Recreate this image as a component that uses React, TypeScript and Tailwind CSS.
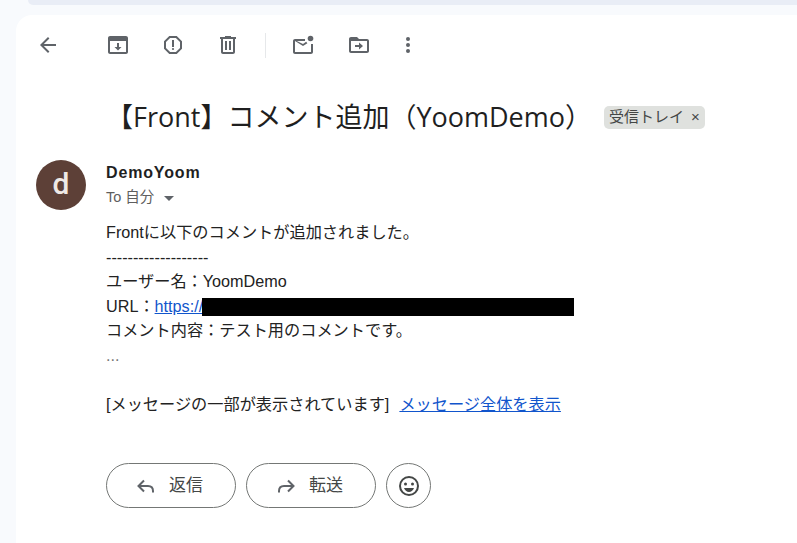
const cjk = '[font-family:"Liberation_Sans","Noto_Sans_CJK_JP",sans-serif]';

function ToolIcon({ children }: { children: React.ReactNode }) {
  return (
    <svg width="24" height="24" viewBox="0 0 24 24" fill="#5f6368" className="shrink-0">
      {children}
    </svg>
  );
}

function Toolbar() {
  return (
    <div className="flex h-[60px] items-center pl-[20px]">
      <ToolIcon>
        <path d="M20 11H7.830l5.590-5.590L12 4l-8 8 8 8 1.410-1.410L7.830 13H20v-2z" />
      </ToolIcon>
      <div className="ml-[46px] flex items-center gap-[31px]">
        <ToolIcon>
          <path d="M20 3H4c-.9 0-2 .9-2 2v14c0 1.100 1 2 2 2h16c1 0 2-.9 2-2V5c0-1.100-1.100-2-2-2zm0 16H4V8h16v11z" />
          <path d="M13 10h-2v4H8.500l3.500 3.500 3.500-3.500H13z" />
        </ToolIcon>
        <ToolIcon>
          <path d="M15.730 3H8.270L3 8.270v7.460L8.270 21h7.460L21 15.730V8.270L15.730 3zM19 14.900 14.900 19H9.100L5 14.900V9.100L9.100 5h5.800L19 9.100v5.800z" />
          <rect x="11" y="7" width="2" height="7" />
          <circle cx="12" cy="16" r="1.100" />
        </ToolIcon>
        <ToolIcon>
          <path d="M15 4V3H9v1H4v2h1v13c0 1.100.9 2 2 2h10c1.100 0 2-.9 2-2V6h1V4h-5zm2 15H7V6h10v13z" />
          <path d="M9 8h2v9H9zm4 0h2v9h-2z" />
        </ToolIcon>
      </div>
      <div className="ml-[25px] h-[25px] w-px bg-[#e6e8ea]" />
      <div className="ml-[25px] flex items-center">
        <ToolIcon>
          <path d="M14 6H4c-1.100 0-2 .9-2 2v11c0 1.100.9 2 2 2h16c1.100 0 2-.9 2-2v-8h-2v8H4V8l8 5 4.400-2.800-1.300-1.500L12 11 5.800 8H14V6z" />
          <circle cx="19.500" cy="5.500" r="2.800" />
        </ToolIcon>
        <div className="ml-[32px]">
          <ToolIcon>
            <path d="M20 6h-8l-2-2H4c-1.100 0-2 .9-2 2v12c0 1.100.9 2 2 2h16c1.100 0 2-.9 2-2V8c0-1.100-.9-2-2-2zm0 12H4V8h16v10z" />
            <path d="M12 9.500v2.500H8v2h4v2.500l4-3.500z" />
          </ToolIcon>
        </div>
        <div className="ml-[25px]">
          <ToolIcon>
            <circle cx="12" cy="6" r="2" />
            <circle cx="12" cy="12" r="2" />
            <circle cx="12" cy="18" r="2" />
          </ToolIcon>
        </div>
      </div>
    </div>
  );
}

function ActionButton({ label, flip }: { label: string; flip?: boolean }) {
  return (
    <button className="flex h-[45px] w-[130px] items-center justify-center gap-[11px] rounded-full border border-[#747775] pr-[5px] text-[17px] text-[#444746]">
      <svg
        width="24"
        height="24"
        viewBox="0 0 24 24"
        fill="none"
        stroke="#5f6368"
        strokeWidth="2"
        className={flip ? '-scale-x-100' : ''}
      >
        <path d="M10 6.500 4.500 12l5.500 5.500M5 12h9c3 0 5 2 5 5v1.500" />
      </svg>
      <span>{label}</span>
    </button>
  );
}

export default function App() {
  return (
    <div className={`h-[543px] w-[797px] overflow-hidden bg-[#f8fafd] ${cjk}`}>
      <div className="ml-[28px] h-[5px] rounded-bl-xl bg-[#e9edf6]" />
      <main className="ml-[16px] mt-[10px] h-[528px] rounded-tl-[16px] bg-white">
        <Toolbar />

        <div className="mt-[25px] flex items-center pl-[90px]">
          <h1 className='text-[27px] leading-[34px] text-[#1f1f1f] [font-family:"Open_Sans","Noto_Sans_CJK_JP",sans-serif]'>
            【Front】コメント追加（YoomDemo）
          </h1>
          <span className="ml-[12px] flex h-[23px] items-center rounded-[5px] bg-[#dfe1de] px-[5px] text-[15px] text-[#444746]">
            受信トレイ
            <span className="ml-[7px] text-[15px]">×</span>
          </span>
        </div>

        <div className="mt-[26px] flex pl-[20px]">
          <div className='flex h-[50px] w-[50px] shrink-0 items-center justify-center rounded-full bg-[#5d4037] pb-[3px] text-[30px] font-medium text-[#efe9e6] [font-family:"Roboto",sans-serif]'>
            d
          </div>
          <div className="ml-[20px] pt-[1px]">
            <div className="text-[16px] leading-[24px] font-bold tracking-[0.85px] text-[#1f1f1f]">DemoYoom</div>
            <div className="flex h-[25px] items-center pt-[1px] text-[14.5px] text-[#5e5e5e]">
              To 自分
              <svg width="10" height="5" viewBox="0 0 10 5" className="ml-[10px]" fill="#5f6368">
                <path d="M0 0h10L5 5z" />
              </svg>
            </div>

            <div className="mt-[10px] text-[16.2px] leading-[24.5px] text-[#222222]">
              <p>Frontに以下のコメントが追加されました。</p>
              <p>-------------------</p>
              <p>ユーザー名：YoomDemo</p>
              <p className="flex items-center">
                URL：
                <a className="text-[#1155cc] underline">https://</a>
                <span className="-ml-[1px] mt-[2px] h-[18px] w-[372px] bg-black" />
              </p>
              <p>コメント内容：テスト用のコメントです。</p>
              <p className="h-[49px] text-[#777777]">...</p>
              <p>
                [メッセージの一部が表示されています]
                <a className="ml-[10px] text-[#1155cc] underline">メッセージ全体を表示</a>
              </p>
            </div>

            <div className="mt-[47px] flex gap-[10px]">
              <ActionButton label="返信" />
              <ActionButton label="転送" flip />
              <button className="flex h-[45px] w-[45px] items-center justify-center rounded-full border border-[#747775]">
                <svg width="24" height="24" viewBox="0 0 24 24" fill="#444746">
                  <path d="M12 2a10 10 0 1 0 0 20 10 10 0 0 0 0-20zm0 18a8 8 0 1 1 0-16 8 8 0 0 1 0 16z" />
                  <circle cx="8.500" cy="10" r="1.500" />
                  <circle cx="15.500" cy="10" r="1.500" />
                  <path d="M7 14h10c-.7 2.300-2.700 4-5 4s-4.300-1.700-5-4z" />
                </svg>
              </button>
            </div>
          </div>
        </div>
      </main>
    </div>
  );
}
